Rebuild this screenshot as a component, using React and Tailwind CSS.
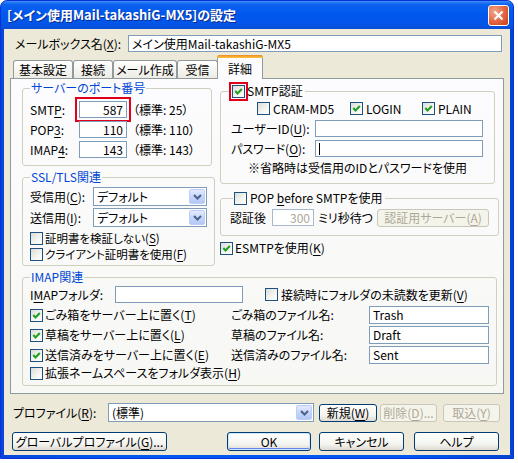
import React from "react";

const U = ({ children }) => (
  <span className="underline underline-offset-[2px] decoration-1">{children}</span>
);

function Check({ checked, red }) {
  return (
    <span
      className={`inline-flex h-[13px] w-[13px] shrink-0 items-center justify-center border border-[#1c5180] bg-[linear-gradient(135deg,#dcdcd7_0%,#f3f3ef_55%,#ffffff_100%)] ${
        red ? "outline-2 outline-offset-1 outline-[#e0001a]" : ""
      }`}
    >
      {checked && (
        <svg width="9" height="9" viewBox="0 0 9 9">
          <path d="M1.3 4.1 L3.5 6.4 L7.8 1.9" fill="none" stroke="#21a121" strokeWidth="2.1" />
        </svg>
      )}
    </span>
  );
}

function Box({ className = "", children, right }) {
  return (
    <div
      className={`flex items-center border border-[#7f9db9] bg-white px-[3px] ${
        right ? "justify-end" : ""
      } ${className}`}
    >
      {children}
    </div>
  );
}

function DropBtn() {
  return (
    <span className="flex h-full w-[16px] items-center justify-center rounded-[2px] border border-[#bdcdf5] bg-[linear-gradient(to_bottom,#e3ebfe,#c5d5fc_50%,#b4c8f7)]">
      <svg width="9" height="6" viewBox="0 0 9 6">
        <path d="M1 1 L4.5 4.5 L8 1" fill="none" stroke="#4d6185" strokeWidth="2" />
      </svg>
    </span>
  );
}

function Combo({ className = "", text }) {
  return (
    <div className={`flex items-center border border-[#7f9db9] bg-white p-[1px] ${className}`}>
      <span className="flex-1 pl-[2px]">{text}</span>
      <DropBtn />
    </div>
  );
}

function Btn({ className = "", children, disabled }) {
  return (
    <div
      className={`flex items-center justify-center rounded-[3px] border ${
        disabled
          ? "border-[#c9c7ba] bg-[#f5f4ea] text-[#aca899]"
          : "border-[#003c74] bg-[linear-gradient(to_bottom,#ffffff,#f4f4f0_65%,#dedad1)]"
      } ${className}`}
    >
      {children}
    </div>
  );
}

function Tab({ className = "", children }) {
  return (
    <div
      className={`mb-[1px] flex h-[18px] items-center justify-center rounded-t-[3px] border border-b-0 border-[#919b9c] bg-[linear-gradient(to_bottom,#ffffff,#f4f3ee_60%,#ecebe5)] ${className}`}
    >
      {children}
    </div>
  );
}

export default function App() {
  return (
    <div className="h-[463px] w-[518px] bg-white font-['Noto_Sans_CJK_JP',sans-serif] text-[12px] leading-[14px] text-black [font-feature-settings:'palt']">
      <div className="flex h-[459px] w-[514px] flex-col overflow-hidden rounded-t-[7px] border border-[#0831d9] bg-[linear-gradient(to_right,#0846d8,#0058ee_20%,#0058ee_80%,#0046d0)]">
        {/* title bar */}
        <div className="flex h-[28px] shrink-0 items-center justify-between bg-[linear-gradient(to_bottom,#3e8ef8_0%,#0b62ef_12%,#0058ee_45%,#0255e8_80%,#0a4ed6_100%)] pl-[6px] pr-[4px]">
          <span className="text-[13px] font-bold leading-[16px] text-white [text-shadow:1px_1px_#0b2a8a]">
            [メイン使用Mail-takashiG-MX5]の設定
          </span>
          <span className="flex h-[21px] w-[21px] items-center justify-center rounded-[3px] border border-white bg-[radial-gradient(circle_at_30%_30%,#f1a88c,#e2643f_55%,#c5401a)]">
            <svg width="11" height="11" viewBox="0 0 11 11">
              <path d="M1.5 1.5 L9.5 9.5 M9.5 1.5 L1.5 9.5" stroke="white" strokeWidth="2.2" />
            </svg>
          </span>
        </div>

        {/* body */}
        <div className="mx-[3px] mb-[3px] flex flex-1 flex-col bg-[#ece9d8]">
          {/* mailbox name */}
          <div className="mt-[6px] flex h-[17px] items-center pl-[11px]">
            <span className="w-[113px]">
              メールボックス名(<U>X</U>):
            </span>
            <Box className="h-[17px] w-[374px]">メイン使用Mail-takashiG-MX5</Box>
          </div>

          {/* tabs */}
          <div className="mt-[3px] flex h-[24px] items-end pl-[9px]">
            <Tab className="w-[60px]">基本設定</Tab>
            <Tab className="w-[40px]">接続</Tab>
            <Tab className="w-[64px]">メール作成</Tab>
            <Tab className="w-[41px]">受信</Tab>
            <div className="relative z-10 -ml-[1px] flex h-[24px] w-[46px] flex-col rounded-t-[3px] border border-b-0 border-[#919b9c] bg-[#fcfcfe]">
              <div className="-mx-[1px] -mt-[1px] h-[3px] rounded-t-[3px] bg-[linear-gradient(to_bottom,#e68b2c,#ffc73c)]" />
              <div className="flex flex-1 items-center justify-center">詳細</div>
            </div>
          </div>

          {/* panel */}
          <div className="ml-[6px] -mt-[1px] h-[316px] w-[494px] border border-[#919b9c] bg-[linear-gradient(to_bottom,#fcfcfe,#f7f7f4)] pl-[11px] pr-[8px]">
            <div className="flex gap-[8px]">
              {/* left column */}
              <div className="flex w-[190px] flex-col pt-[2px]">
                <fieldset className="h-[85px] rounded-[3px] border border-[#d0d0bf] px-[7px]">
                  <legend className="px-[1px] text-[#0046d5]">サーバーのポート番号</legend>
                  <div className="mt-[6px] flex h-[17px] items-center">
                    <span className="w-[49px]">
                      SMT<U>P</U>:
                    </span>
                    <Box right className="h-[17px] w-[48px] outline-2 outline-offset-2 outline-[#e0001a]">
                      587
                    </Box>
                    <span className="ml-[6px]">（標準: 25）</span>
                  </div>
                  <div className="mt-[3px] flex h-[17px] items-center">
                    <span className="w-[49px]">
                      POP<U>3</U>:
                    </span>
                    <Box right className="h-[17px] w-[48px]">
                      110
                    </Box>
                    <span className="ml-[6px]">（標準: 110）</span>
                  </div>
                  <div className="mt-[3px] flex h-[17px] items-center">
                    <span className="w-[49px]">
                      IMAP<U>4</U>:
                    </span>
                    <Box right className="h-[17px] w-[48px]">
                      143
                    </Box>
                    <span className="ml-[6px]">（標準: 143）</span>
                  </div>
                </fieldset>

                <fieldset className="mt-[4px] h-[96px] rounded-[3px] border border-[#d0d0bf] px-[7px]">
                  <legend className="px-[1px] text-[#0046d5]">SSL/TLS関連</legend>
                  <div className="mt-[3px] flex h-[19px] items-center">
                    <span className="w-[63px]">
                      受信用(<U>C</U>):
                    </span>
                    <Combo className="h-[19px] w-[114px]" text="デフォルト" />
                  </div>
                  <div className="mt-[2px] flex h-[19px] items-center">
                    <span className="w-[63px]">
                      送信用(<U>I</U>):
                    </span>
                    <Combo className="h-[19px] w-[114px]" text="デフォルト" />
                  </div>
                  <div className="mt-[3px] flex h-[16px] items-center gap-[2px]">
                    <Check />
                    <span className="block h-[14px] overflow-visible text-[11.5px] leading-[14px]">
                      証明書を検証しない(<U>S</U>)
                    </span>
                  </div>
                  <div className="flex h-[16px] items-center gap-[2px]">
                    <Check />
                    <span className="block h-[14px] overflow-visible text-[11.5px] leading-[14px]">
                      クライアント証明書を使用(<U>F</U>)
                    </span>
                  </div>
                </fieldset>
              </div>

              {/* right column */}
              <div className="flex w-[275px] flex-col pt-[4px]">
                <fieldset className="h-[101px] rounded-[3px] border border-[#d0d0bf] px-[10px]">
                  <legend className="flex h-[16px] items-center gap-[2px] pl-[1px] pr-[2px]">
                    <Check checked red />
                    <span>SMTP認証</span>
                  </legend>
                  <div className="mt-[2px] flex h-[15px] items-center pl-[26px]">
                    <div className="flex w-[93px] items-center gap-[3px]">
                      <Check />
                      <span>CRAM-MD5</span>
                    </div>
                    <div className="flex w-[72px] items-center gap-[3px]">
                      <Check checked />
                      <span>LOGIN</span>
                    </div>
                    <div className="flex items-center gap-[3px]">
                      <Check checked />
                      <span>PLAIN</span>
                    </div>
                  </div>
                  <div className="mt-[4px] flex h-[17px] items-center">
                    <span className="w-[84px]">
                      ユーザーID(<U>U</U>):
                    </span>
                    <Box className="h-[17px] w-[168px]" />
                  </div>
                  <div className="mt-[3px] flex h-[17px] items-center">
                    <span className="w-[84px]">
                      パスワード(<U>O</U>):
                    </span>
                    <Box className="h-[17px] w-[168px]">
                      <span className="h-[12px] w-[1px] bg-black" />
                    </Box>
                  </div>
                  <div className="mt-[4px] flex h-[14px] items-center pl-[17px]">
                    ※省略時は受信用のIDとパスワードを使用
                  </div>
                </fieldset>

                <fieldset className="mt-[6px] h-[46px] rounded-[3px] border border-[#d0d0bf] px-[9px]">
                  <legend className="ml-[3px] flex h-[16px] items-center gap-[3px] pl-[1px] pr-[2px]">
                    <Check />
                    <span>
                      POP <U>b</U>efore SMTPを使用
                    </span>
                  </legend>
                  <div className="mt-[3px] flex h-[17px] items-center">
                    <span className="w-[42px]">認証後</span>
                    <Box right className="h-[17px] w-[42px] border-[#a7b8d0] text-[#aca899]">
                      300
                    </Box>
                    <span className="ml-[4px] w-[59px]">ミリ秒待つ</span>
                    <Btn disabled className="h-[18px] w-[112px]">
                      <span>
                        認証用サーバー(<U>A</U>)
                      </span>
                    </Btn>
                  </div>
                </fieldset>

                <div className="mt-[5px] flex h-[14px] items-center gap-[2px]">
                  <Check checked />
                  <span>
                    ESMTPを使用(<U>K</U>)
                  </span>
                </div>
              </div>
            </div>

            {/* IMAP */}
            <fieldset className="mt-[4px] h-[116px] w-[473px] rounded-[3px] border border-[#d0d0bf] px-[7px]">
              <legend className="px-[1px] text-[#0046d5]">IMAP関連</legend>
              <div className="mt-[2px] flex h-[17px] items-center">
                <span className="w-[85px]">
                  I<U>M</U>APフォルダ:
                </span>
                <Box className="h-[17px] w-[128px]" />
                <div className="ml-[22px] flex items-center gap-[3px]">
                  <Check />
                  <span>
                    接続時にフォルダの未読数を更新(<U>V</U>)
                  </span>
                </div>
              </div>
              {[
                ["ごみ箱をサーバー上に置く(", "T", ")", "ごみ箱のファイル名:", "Trash", "mt-[3px]"],
                ["草稿をサーバー上に置く(", "L", ")", "草稿のファイル名:", "Draft", "mt-[2px]"],
                ["送信済みをサーバー上に置く(", "E", ")", "送信済みのファイル名:", "Sent", "mt-[2px]"],
              ].map(([a, k, b, lbl, val, mt]) => (
                <div key={val} className={`flex h-[18px] items-center ${mt}`}>
                  <div className="flex w-[201px] items-center gap-[2px]">
                    <Check checked />
                    <span>
                      {a}
                      <U>{k}</U>
                      {b}
                    </span>
                  </div>
                  <span className="w-[138px]">{lbl}</span>
                  <Box className="h-[18px] w-[120px]">{val}</Box>
                </div>
              ))}
              <div className="mt-[2px] flex h-[14px] items-center gap-[2px]">
                <Check />
                <span>
                  拡張ネームスペースをフォルダ表示(<U>H</U>)
                </span>
              </div>
            </fieldset>
          </div>

          {/* profile row */}
          <div className="mt-[9px] flex h-[19px] items-center pl-[9px]">
            <span className="w-[95px]">
              プロファイル(<U>R</U>):
            </span>
            <Combo className="h-[19px] w-[206px]" text="(標準)" />
            <Btn className="ml-[5px] h-[18px] w-[58px]">
              <span>
                新規(<U>W</U>)
              </span>
            </Btn>
            <Btn disabled className="ml-[3px] h-[18px] w-[57px]">
              <span>
                削除(<U>D</U>)...
              </span>
            </Btn>
            <Btn disabled className="ml-[6px] h-[18px] w-[57px]">
              <span>
                取込(<U>Y</U>)
              </span>
            </Btn>
          </div>

          {/* bottom buttons */}
          <div className="mt-[10px] flex h-[19px] items-center pl-[8px]">
            <Btn className="h-[19px] w-[155px]">
              <span>
                グローバルプロファイル(<U>G</U>)...
              </span>
            </Btn>
            <Btn className="ml-[60px] h-[19px] w-[84px] shadow-[inset_0_0_0_1px_#cee7ff,inset_0_-1px_0_1px_#6982ee]">
              OK
            </Btn>
            <Btn className="ml-[8px] h-[19px] w-[85px]">キャンセル</Btn>
            <Btn className="ml-[10px] h-[19px] w-[85px]">ヘルプ</Btn>
          </div>
        </div>
      </div>
    </div>
  );
}
